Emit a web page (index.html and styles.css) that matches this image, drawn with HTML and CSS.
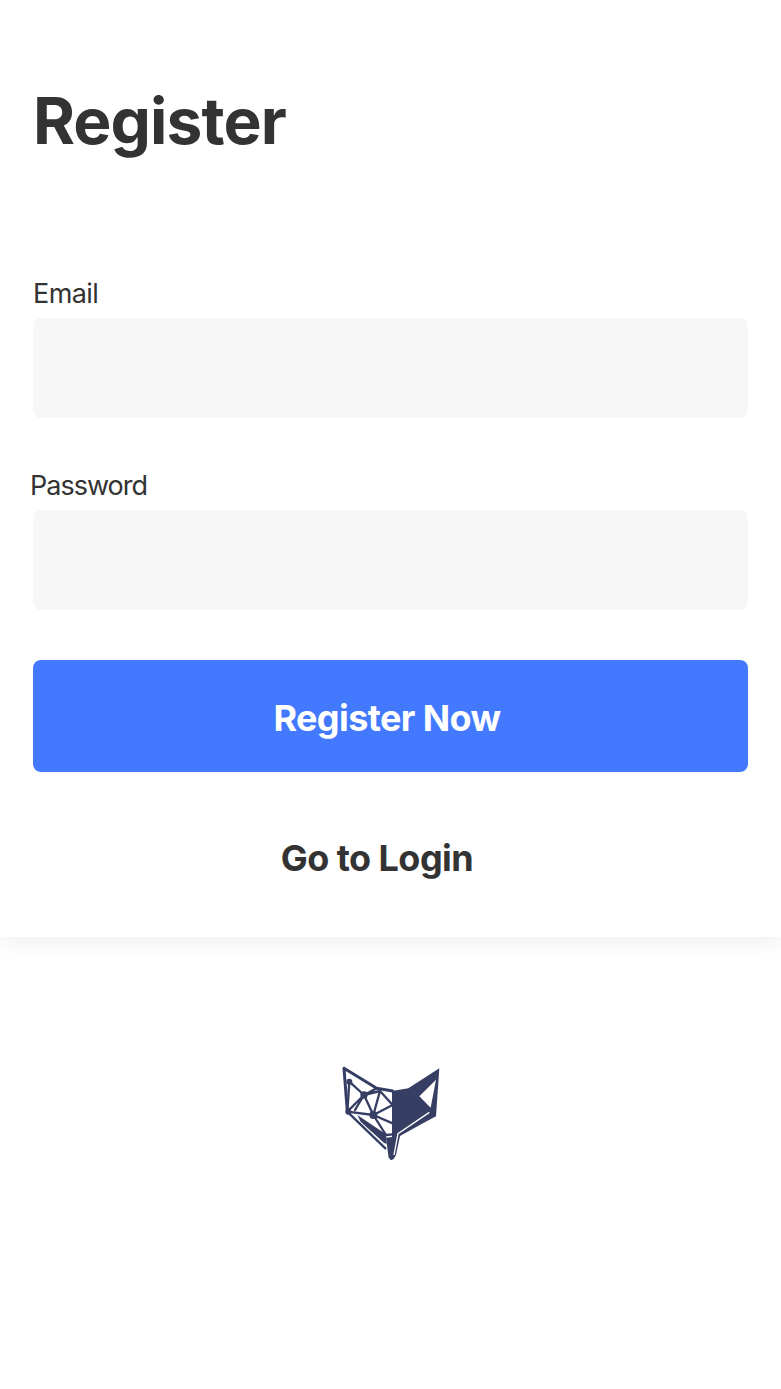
FILE: index.html
```html
<!DOCTYPE html>
<html lang="en">
<head>
    <meta charset="UTF-8">
    <meta name="viewport" content="width=device-width, initial-scale=1.0">
    <title>Register</title>
    <link rel="stylesheet" href="styles.css">
</head>
<body>
    <div class="card">
        <h1 class="title">Register</h1>
        <form class="form">
            <label class="label" for="email">Email</label>
            <input class="input" id="email" type="email">
            <label class="label label-password" for="password">Password</label>
            <input class="input" id="password" type="password">
            <button class="btn" type="button"><span>Register Now</span></button>
        </form>
        <a href="#" class="login-link">Go to Login</a>
    </div>
    <div class="footer">
        <svg class="logo" viewBox="0 0 375 345" width="125" height="115" aria-hidden="true">
            <!-- right half, solid -->
            <path fill="#363e63" fill-rule="evenodd" d="M186 108 L235 100 L328 40 L318 184 L276 206 L210 243 L198 300 L191 312 L183 316 L176 308 L168 248 L186 246 L186 108 Z M268 124 L302 158 L318 74 Z"/>
            <!-- slits in the lower part -->
            <path fill="none" stroke="#fff" stroke-width="4" d="M298 172 L204 236 L192 300"/>
            <!-- left half, mesh -->
            <g fill="none" stroke="#363e63" stroke-linejoin="round" stroke-linecap="round">
                <path stroke-width="9" d="M42 40 L140 100 L188 108 M42 40 L52 170"/>
                <path stroke-width="7" d="M58 80 L102 120 L140 100 M58 80 L52 170 L102 120 L130 180 L188 150 M102 120 L150 108 L188 150 M52 170 L130 180 L188 205 M102 120 L75 165 M150 108 L130 180 M130 180 L168 240 L188 238 M54 172 L166 280"/>
            </g>
            <!-- lower left wedge -->
            <path fill="#363e63" d="M82 180 L168 238 L170 268 L160 262 L92 200 Z"/>
            <circle cx="58" cy="80" r="9" fill="#363e63"/>
            <circle cx="102" cy="120" r="11" fill="#363e63"/>
            <circle cx="55" cy="170" r="9" fill="#363e63"/>
            <circle cx="130" cy="180" r="12" fill="#363e63"/>
        </svg>
    </div>
</body>
</html>
```

FILE: styles.css
```css
* {
    box-sizing: border-box;
}
body {
    margin: 0;
    font-family: Inter, sans-serif;
    color: #333;
    background-color: #fff;
}
.card {
    height: 937px;
    padding: 83px 33px 0;
    background: #fff;
    box-shadow: 0 4px 24px rgba(0,0,0,0.08);
}
.title {
    margin: 0 0 118px;
    font-size: 64px;
    line-height: 76px;
    font-weight: 700;
    letter-spacing: -0.9px;
}
.form {
    display: flex;
    flex-direction: column;
}
.label {
    display: block;
    font-size: 27px;
    line-height: 34px;
    letter-spacing: -0.6px;
    margin-bottom: 7px;
}
.label-password {
    margin-left: -3px;
    letter-spacing: -1px;
}
.input {
    display: block;
    width: 100%;
    height: 100px;
    margin-bottom: 51px;
    border: none;
    border-radius: 8px;
    background: #f7f7f7;
}
.input:last-of-type {
    margin-bottom: 50px;
}
.btn {
    height: 112px;
    padding: 4px 7px 0 0;
    border: none;
    border-radius: 8px;
    background: #4279ff;
    color: #fff;
    font-family: inherit;
    font-size: 36px;
    font-weight: 700;
    letter-spacing: -0.6px;
}
.login-link {
    display: block;
    margin-top: 64px;
    padding-right: 27px;
    text-align: center;
    font-size: 36px;
    line-height: 44px;
    font-weight: 700;
    letter-spacing: -0.55px;
    color: #333;
    text-decoration: none;
}
.footer {
    padding: 118px 0 229px;
    text-align: center;
}
.logo {
    display: block;
    margin: 0 auto;
    transform: translateX(2px);
}
```
